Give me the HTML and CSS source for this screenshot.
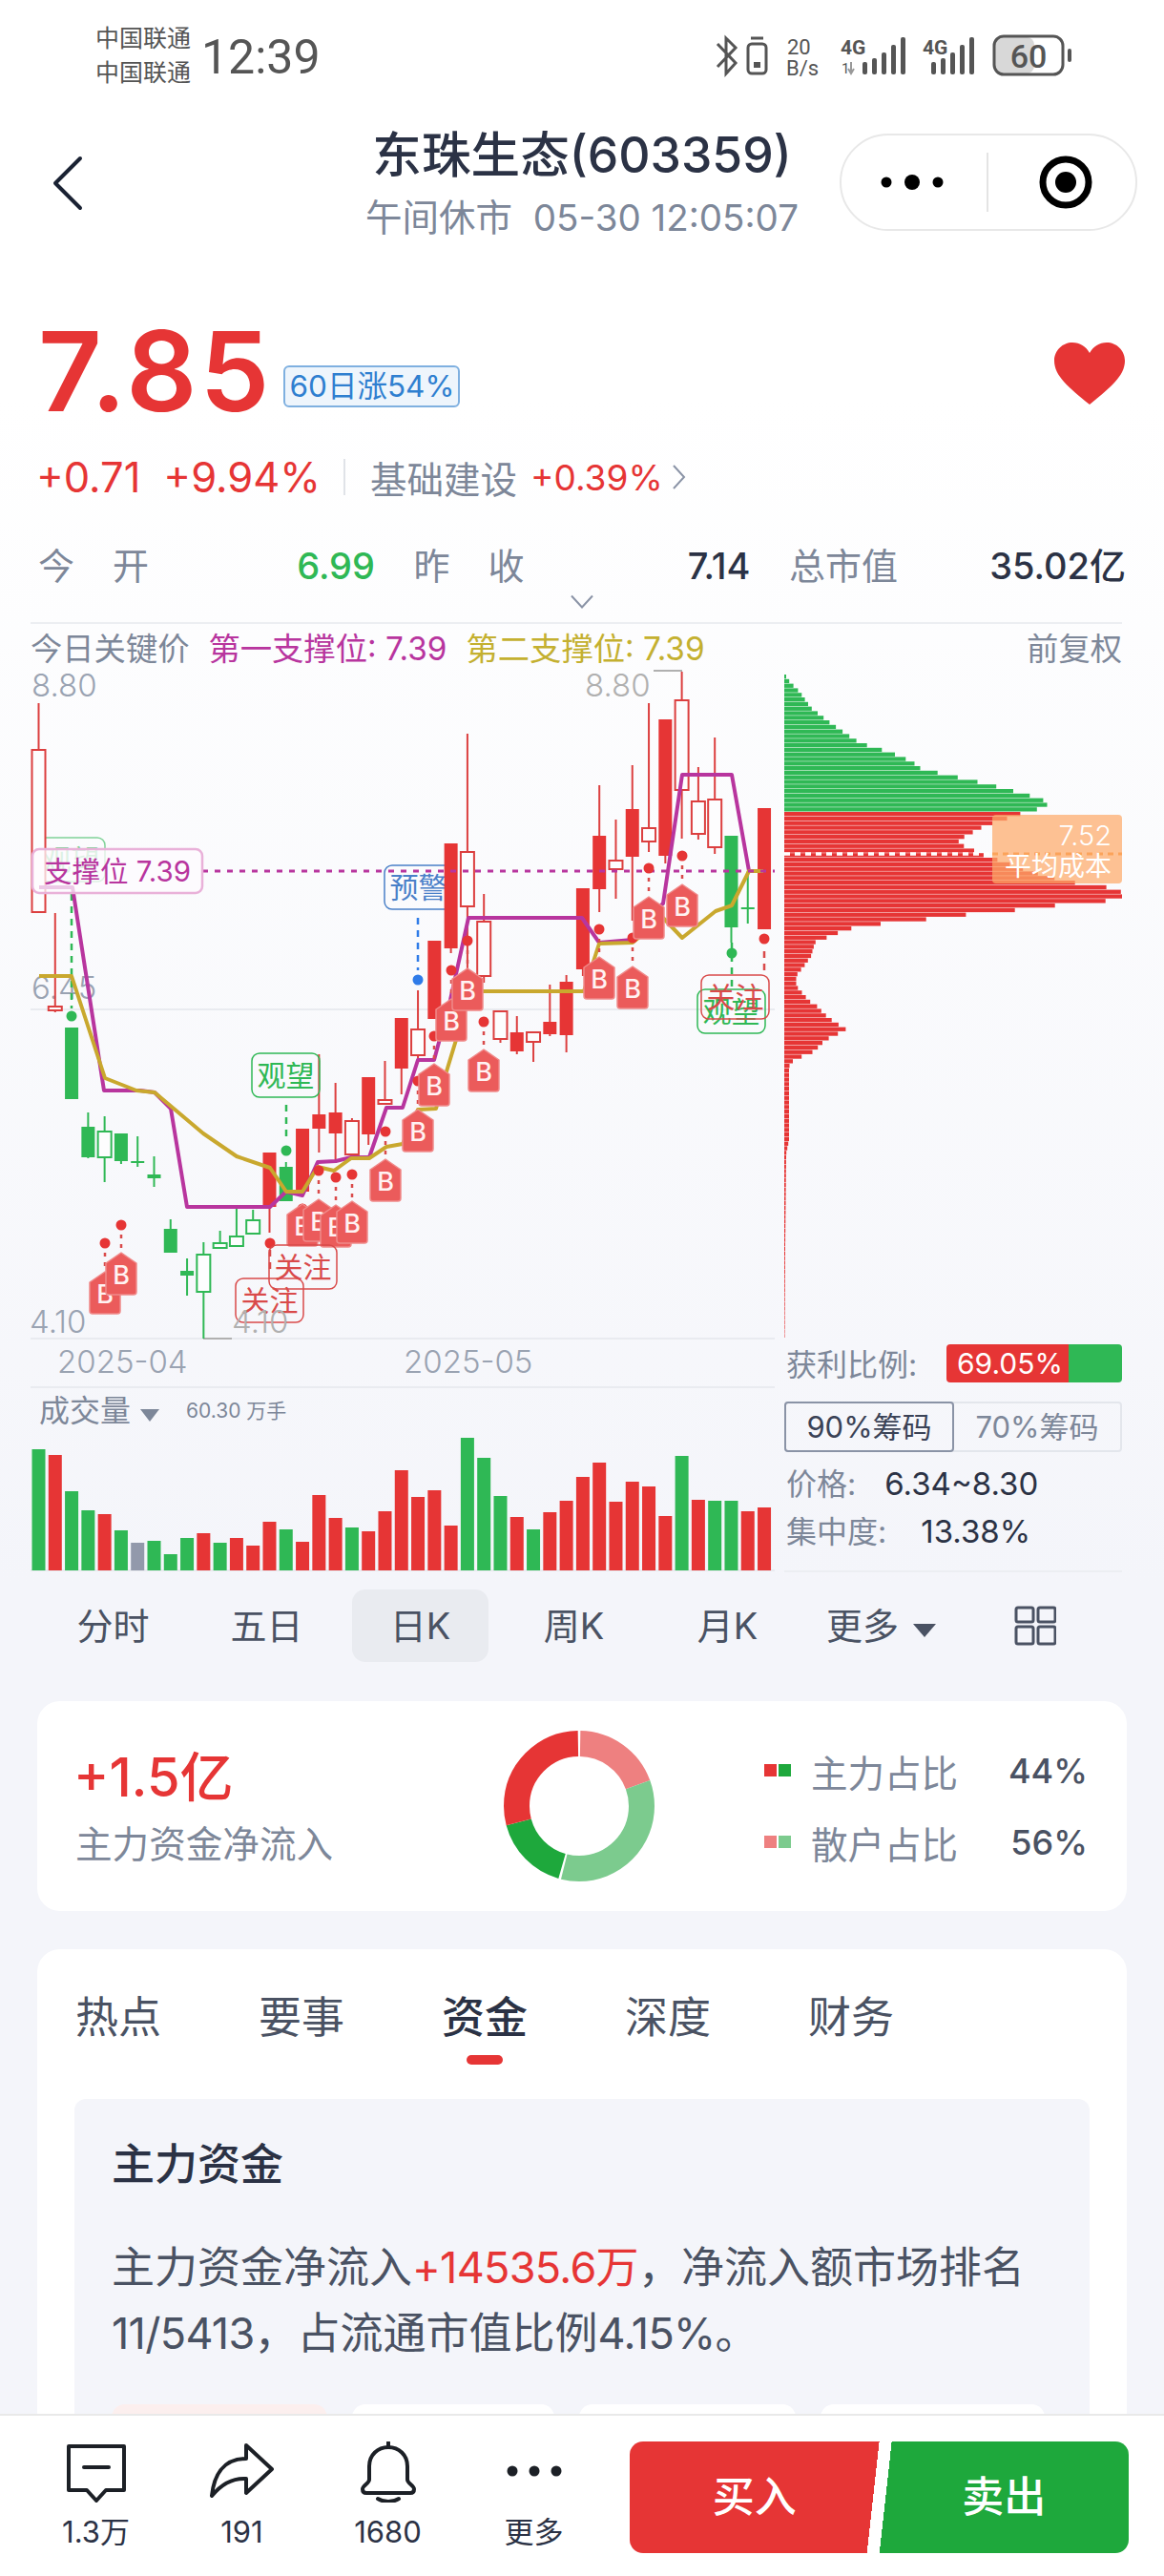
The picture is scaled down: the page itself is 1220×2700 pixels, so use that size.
FILE: index.html
```html
<!DOCTYPE html>
<html lang="zh-CN">
<head>
    <meta charset="UTF-8">
    <meta name="viewport" content="width=device-width, initial-scale=1.0">
    <title>东珠生态(603359)</title>
    <link rel="stylesheet" href="styles.css">
</head>
<body>
<div class="page">

    <header class="status">
        <div class="carriers"><span>中国联通</span><span>中国联通</span></div>
        <div class="clock">12:39</div>
        <svg class="status-icons" viewBox="740 30 390 60" width="390" height="60">
            <g fill="none" stroke="#555" stroke-width="3">
                <path d="M752 47 L771 67 L761 78 V41 L771 51 L752 71"/>
                <rect x="784" y="47" width="19" height="31" rx="4"/>
                <path d="M787 41 H800"/>
            </g>
            <rect x="790" y="66" width="7" height="6" fill="#555"/>
            <text class="st-speed" x="825" y="58">20</text>
            <text class="st-speed" x="824" y="80">B/s</text>
            <text class="st-net" x="881" y="58">4G</text>
            <text class="st-small" x="882" y="78">1</text>
            <path d="M892 66 V78 M889 73 L892 78 L895 73" stroke="#999" stroke-width="2" fill="none"/>
            <g fill="#555">
                <rect x="904" y="66" width="5" height="13" rx="2"/>
                <rect x="914" y="62" width="5" height="17" rx="2"/>
                <rect x="924" y="56" width="5" height="23" rx="2"/>
                <rect x="934" y="48" width="5" height="31" rx="2"/>
                <rect x="944" y="40" width="5" height="39" rx="2"/>
            </g>
            <text class="st-net" x="967" y="58">4G</text>
            <g fill="#555">
                <rect x="976" y="66" width="5" height="13" rx="2"/>
                <rect x="986" y="62" width="5" height="17" rx="2"/>
                <rect x="996" y="56" width="5" height="23" rx="2"/>
                <rect x="1006" y="48" width="5" height="31" rx="2"/>
                <rect x="1016" y="40" width="5" height="39" rx="2"/>
            </g>
            <rect x="1043" y="40" width="41" height="38" rx="8" fill="#d8d8d8"/>
            <rect x="1042" y="39" width="72" height="40" rx="10" fill="none" stroke="#555" stroke-width="3"/>
            <text class="st-batt" x="1078" y="72">60</text>
            <rect x="1119" y="52" width="4" height="14" rx="2" fill="#555"/>
        </svg>
    </header>

    <nav class="nav">
        <svg class="back" width="34" height="60" viewBox="0 0 34 60"><path d="M30 4 L4 30 L30 56" fill="none" stroke="#1a2233" stroke-width="4" stroke-linecap="round" stroke-linejoin="round"/></svg>
        <div class="nav-title">
            <h1>东珠生态(603359)</h1>
            <p>午间休市&nbsp; 05-30 12:05:07</p>
        </div>
        <div class="capsule">
            <svg width="80" height="24" viewBox="0 0 80 24"><circle cx="13" cy="12" r="5.5"/><circle cx="40" cy="12" r="8"/><circle cx="67" cy="12" r="5.5"/></svg>
            <span class="capsule-line"></span>
            <svg width="58" height="58" viewBox="0 0 58 58"><circle cx="29" cy="29" r="24" fill="none" stroke="#000" stroke-width="7"/><circle cx="29" cy="29" r="11"/></svg>
        </div>
    </nav>

    <section class="price-row">
        <div class="price">7.85</div>
        <div class="price-tag">60日涨54%</div>
        <svg class="heart" width="76" height="68" viewBox="0 0 76 68"><path d="M38 66 C16 48 1 36 1 20 C1 9 10 1 20 1 C28 1 34 5 38 12 C42 5 48 1 56 1 C66 1 75 9 75 20 C75 36 60 48 38 66 Z" fill="#e63535"/></svg>
    </section>

    <section class="change-row">
        <span class="up">+0.71</span>
        <span class="up pct">+9.94%</span>
        <span class="change-line"></span>
        <span class="sector">基础建设</span>
        <span class="up sector-pct">+0.39%</span>
        <svg width="16" height="30" viewBox="0 0 16 30"><path d="M2 3 L13 15 L2 27" fill="none" stroke="#8a93a6" stroke-width="2"/></svg>
    </section>

    <section class="stats">
        <div class="stat"><span class="wide">今开</span><b class="green">6.99</b></div>
        <div class="stat"><span class="wide">昨收</span><b>7.14</b></div>
        <div class="stat"><span>总市值</span><b>35.02亿</b></div>
    </section>
    <svg class="more-arrow" width="26" height="20" viewBox="0 0 26 20"><path d="M2 4 L13 16 L24 4" fill="none" stroke="#8a93a6" stroke-width="2"/></svg>

    <section class="chart">
        <div class="chart-head">
            <span>今日关键价</span>
            <span class="c-purple">第一支撑位: 7.39</span>
            <span class="c-yellow">第二支撑位: 7.39</span>
            <span class="adjust">前复权</span>
        </div>
        <div class="chart-body">
            <svg id="kline" class="kline" width="812" height="948" viewBox="0 700 812 948"></svg>
            <div class="chips">
                <div class="chips-plot">
                    <svg id="chips" width="354" height="702" viewBox="822 700 354 702"></svg>
                    <div class="cost">
                        <span>7.52</span>
                        <span>平均成本</span>
                    </div>
                </div>
                <div class="ratio">
                    <span>获利比例:</span>
                    <div class="ratio-bar"><span>69.05%</span></div>
                </div>
                <div class="chip-tabs">
                    <span class="chip-tab active">90%筹码</span>
                    <span class="chip-tab">70%筹码</span>
                </div>
                <div class="chip-line first">价格:<b>6.34~8.30</b></div>
                <div class="chip-line">集中度:<b>13.38%</b></div>
            </div>
        </div>
    </section>

    <div class="periods">
        <span>分时</span>
        <span>五日</span>
        <span class="active">日K</span>
        <span>周K</span>
        <span>月K</span>
        <span>更多<i class="caret"></i></span>
        <svg width="44" height="42" viewBox="0 0 44 42"><g fill="none" stroke="#4a5263" stroke-width="3"><rect x="2" y="2" width="18" height="15" rx="2"/><rect x="25" y="2" width="18" height="15" rx="2"/><rect x="2" y="22" width="18" height="18" rx="2"/><rect x="25" y="22" width="18" height="18" rx="2"/></g></svg>
    </div>

    <section class="flow-card">
        <div class="flow-main">
            <div class="flow-num">+1.5亿</div>
            <div class="flow-label">主力资金净流入</div>
        </div>
        <svg class="donut" width="160" height="160" viewBox="0 0 160 160">
            <g fill="none" stroke-width="27" transform="rotate(-90 80 80)">
                <circle cx="80" cy="80" r="65.5" pathLength="360" stroke="#ee8080" stroke-dasharray="69 360" stroke-dashoffset="-1"/>
                <circle cx="80" cy="80" r="65.5" pathLength="360" stroke="#7ccb8e" stroke-dasharray="124 360" stroke-dashoffset="-70"/>
                <circle cx="80" cy="80" r="65.5" pathLength="360" stroke="#1ea83c" stroke-dasharray="59 360" stroke-dashoffset="-196"/>
                <circle cx="80" cy="80" r="65.5" pathLength="360" stroke="#e63535" stroke-dasharray="104 360" stroke-dashoffset="-255"/>
            </g>
        </svg>
        <div class="legend">
            <div class="legend-row">
                <i class="sq" style="background:#e63535"></i><i class="sq" style="background:#1ea83c"></i>
                <span>主力占比</span><b>44%</b>
            </div>
            <div class="legend-row">
                <i class="sq" style="background:#ee8080"></i><i class="sq" style="background:#7ccb8e"></i>
                <span>散户占比</span><b>56%</b>
            </div>
        </div>
    </section>

    <section class="news-card">
        <div class="news-tabs">
            <span>热点</span>
            <span>要事</span>
            <span class="active">资金</span>
            <span>深度</span>
            <span>财务</span>
        </div>
        <div class="fund-panel">
            <h2>主力资金</h2>
            <p>主力资金净流入<span class="up num">+14535.6万</span>，净流入额市场排名<br><span class="num">11/5413</span>，占流通市值比例<span class="num">4.15%</span>。</p>
            <div class="fund-cells">
                <div class="cell pink"></div>
                <div class="cell c2"></div>
                <div class="cell c3"></div>
                <div class="cell c4"></div>
            </div>
        </div>
    </section>

    <footer class="bar">
        <div class="action">
            <svg width="64" height="64" viewBox="0 0 64 64"><g fill="none" stroke="#1c2026" stroke-width="4" stroke-linejoin="round" stroke-linecap="round"><path d="M3 5 H61 V51 H42 L32 62 L22 51 H3 Z"/><path d="M19 27 H45"/></g></svg>
            <span>1.3万</span>
        </div>
        <div class="action">
            <svg width="70" height="64" viewBox="0 0 70 64"><path d="M39 4 L66 29 L39 54 V39 C24 38 12 46 3 57 C5 37 14 18 39 18 Z" fill="none" stroke="#1c2026" stroke-width="4" stroke-linejoin="round"/></svg>
            <span>191</span>
        </div>
        <div class="action">
            <svg width="60" height="64" viewBox="0 0 60 64"><g fill="none" stroke="#1c2026" stroke-width="4" stroke-linecap="round" stroke-linejoin="round"><path d="M30 1 V6"/><path d="M10 40 V26 C10 14 19 6 30 6 C41 6 50 14 50 26 V40 C50 44 57 46 57 50 C57 53 55 54 53 54 H7 C5 54 3 53 3 50 C3 46 10 44 10 40 Z"/><path d="M19 60 C25 64 35 64 41 60"/></g></svg>
            <span>1680</span>
        </div>
        <div class="action">
            <svg width="64" height="64" viewBox="0 0 64 64"><g fill="#1c2026"><circle cx="9" cy="31" r="5.5"/><circle cx="32" cy="31" r="5.5"/><circle cx="55" cy="31" r="5.5"/></g></svg>
            <span>更多</span>
        </div>
        <div class="trade">
            <span>买入</span>
            <span>卖出</span>
        </div>
    </footer>

</div>
<script src="chart.js"></script>
</body>
</html>
```

FILE: styles.css
```css
*{
    box-sizing: border-box;
    margin: 0;
    padding: 0;
}
body{
    font-family: Inter, "Noto Sans CJK SC", sans-serif;
    color: #2b3245;
}
.page{
    position: relative;
    width: 1220px;
    height: 2700px;
    overflow: hidden;
    background: linear-gradient(#fff 0, #fff 420px, #f4f5fa 1660px);
}
.up{ color: #e63535; }
.green{ color: #2fb855; }
.c-purple{ color: #b8359e; }
.c-yellow{ color: #c4b030; }

/* status bar */
.status{
    display: flex;
    align-items: center;
    height: 118px;
    padding-left: 100px;
    font-family: Roboto, "Noto Sans CJK SC", sans-serif;
    color: #555;
}
.carriers{
    display: flex;
    flex-direction: column;
    font-size: 25px;
    line-height: 36px;
}
.clock{
    margin: 2px 0 0 11px;
    font-size: 50px;
}
.status-icons{
    margin-left: auto;
    margin-right: 90px;
}
.status-icons text{
    font-family: Roboto, sans-serif;
    fill: #555;
}
.st-speed{ font-size: 22px; }
.st-net{ font-size: 21px; font-weight: 700; }
.st-small{ font-size: 15px; }
.st-batt{ font-size: 34px; text-anchor: middle; font-weight: 500; }

/* nav */
.nav{
    display: grid;
    grid-template-columns: 1fr auto 1fr;
    align-items: start;
    height: 132px;
    padding: 0 28px;
}
.back{
    margin: 44px 0 0 26px;
}
.nav-title{
    text-align: center;
}
.nav-title h1{
    font-size: 51.6px;
    font-weight: 500;
    line-height: 60px;
    margin-top: 14px;
}
.nav-title p{
    font-size: 38.5px;
    line-height: 46px;
    margin-top: 13px;
    color: #7d8799;
}
.capsule{
    justify-self: end;
    display: flex;
    align-items: center;
    width: 312px;
    height: 102px;
    margin-top: 22px;
    padding: 0 44px 0 34px;
    border: 2px solid #e8e8e8;
    border-radius: 51px;
}
.capsule-line{
    width: 2px;
    height: 62px;
    margin: 0 auto 0 38px;
    background: #e4e4e4;
}

/* price */
.price-row{
    display: flex;
    align-items: center;
    height: 112px;
    margin-top: 83px;
    padding: 0 40px;
}
.price{
    font-size: 116px;
    font-weight: 600;
    letter-spacing: 3px;
    line-height: 112px;
    color: #e63535;
}
.price-tag{
    margin: 32px 0 0 12px;
    padding: 0 4px;
    height: 44px;
    border: 2px solid #7fb0e0;
    border-radius: 6px;
    background: #eef5fc;
    color: #2f7fd0;
    font-size: 31.5px;
    line-height: 40px;
}
.heart{
    margin: 6px 0 0 auto;
}
.change-row{
    display: flex;
    align-items: center;
    height: 44px;
    margin-top: 33px;
    padding-left: 38px;
    font-size: 43.5px;
}
.pct{ margin-left: 24px; }
.change-line{
    width: 2px;
    height: 38px;
    margin: 0 26px 0 24px;
    background: #e0e3e8;
}
.sector{
    font-size: 38.5px;
    color: #7d8799;
}
.sector-pct{
    margin: 0 9px 0 14px;
    font-size: 37px;
}

.stats{
    display: flex;
    justify-content: space-between;
    height: 44px;
    margin-top: 49px;
    padding: 0 40px;
    font-size: 38px;
    line-height: 44px;
}
.stat{
    display: flex;
    justify-content: space-between;
    width: 353px;
    color: #7d8799;
}
.stat b{
    font-weight: 500;
    color: #2b3245;
}
.stat b.green{ color: #2fb855; }
.wide{ letter-spacing: 40px; }
.more-arrow{
    display: block;
    margin: 4px 0 0 597px;
    height: 23px;
}

/* chart */
.chart-head{
    display: flex;
    align-items: center;
    gap: 20px;
    height: 48px;
    margin: 10px 44px 0 32px;
    border-top: 2px solid #eceef2;
    font-size: 33.3px;
    color: #7d8799;
}
.adjust{ margin-left: auto; }
.chart-body{
    display: flex;
    height: 948px;
}
.kline{
    display: block;
    overflow: visible;
}
.kline text{
    font-family: Inter, "Noto Sans CJK SC", sans-serif;
}
.axis{ font-size: 33px; fill: #9aa3b2; font-weight: 300; }
.axis-mark{ font-size: 33px; fill: #b0b0b0; font-weight: 300; }
.sig{ font-size: 30px; text-anchor: middle; }
.b-text{ font-size: 27px; font-weight: 500; fill: #fff2f2; text-anchor: middle; }
.vol-title{ font-size: 32px; fill: #7d8799; }
.vol-value{ font-size: 21px; fill: #7d8799; }

.chips{
    width: 354px;
    margin-left: 10px;
    border-bottom: 2px solid #eceef2;
}
.chips-plot{
    position: relative;
    height: 702px;
}
.chips-plot svg{ display: block; }
.cost{
    position: absolute;
    top: 154px;
    right: 0;
    display: flex;
    flex-direction: column;
    align-items: flex-end;
    width: 136px;
    height: 72px;
    padding: 6px 11px 0 0;
    border-radius: 4px;
    background: rgba(253, 171, 105, 0.72);
    color: #fff;
    line-height: 32px;
}
.cost span:first-child{ font-size: 29px; font-weight: 300; }
.cost span:last-child{ font-size: 28px; }
.ratio{
    display: flex;
    justify-content: space-between;
    align-items: center;
    height: 40px;
    margin-top: 7px;
    padding-left: 2px;
    font-size: 32px;
    color: #7d8799;
}
.ratio > span{ margin-top: -3px; }
.ratio-bar{
    width: 184px;
    height: 40px;
    border-radius: 4px;
    background: linear-gradient(90deg, #e63535 128px, #2fb855 128px);
    color: #fff;
    font-size: 30px;
    line-height: 40px;
    padding-left: 11px;
}
.chip-tabs{
    display: flex;
    height: 53px;
    margin-top: 20px;
    border: 2px solid #e3e6ec;
    border-radius: 4px;
    font-size: 31px;
    line-height: 49px;
    color: #7d8799;
}
.chip-tab{
    flex: 1;
    text-align: center;
}
.chip-tab.active{
    margin: -2px 0 -2px -2px;
    flex: 0 0 178px;
    height: 53px;
    border: 2px solid #8a93a6;
    border-radius: 4px;
    color: #3a4256;
}
.chip-line{
    height: 50px;
    padding-left: 2px;
    font-size: 32px;
    line-height: 50px;
    color: #7d8799;
}
.chip-line.first{ margin-top: 8px; }
.chip-line b{
    margin-left: 30px;
    font-size: 33px;
    font-weight: 400;
    color: #2b3245;
}
.chip-line + .chip-line b{ margin-left: 36px; }

/* periods */
.periods{
    display: grid;
    grid-template-columns: repeat(7, 161px);
    justify-items: center;
    align-items: center;
    height: 76px;
    margin-top: 18px;
    padding-left: 38px;
    font-size: 38px;
    color: #4a5263;
}
.periods span{
    line-height: 76px;
}
.periods .active{
    width: 143px;
    border-radius: 14px;
    background: #e9ebf0;
    text-align: center;
}
.caret{
    display: inline-block;
    margin-left: 15px;
    vertical-align: 2px;
    border-left: 12px solid transparent;
    border-right: 12px solid transparent;
    border-top: 14px solid #4a5263;
}

/* fund flow card */
.flow-card{
    display: flex;
    align-items: center;
    height: 220px;
    margin: 41px 39px 0;
    border-radius: 24px;
    background: #fff;
}
.flow-main{
    width: 488px;
    padding-left: 38px;
}
.flow-num{
    font-size: 56px;
    font-weight: 500;
    line-height: 70px;
    color: #e63535;
}
.flow-label{
    margin: 10px 0 0 2px;
    font-size: 38.6px;
    line-height: 50px;
    color: #7d8799;
}
.legend{
    margin-left: 114px;
}
.legend-row{
    display: flex;
    align-items: center;
    width: 339px;
    height: 75px;
    font-size: 38.5px;
}
.sq{
    width: 13px;
    height: 13px;
    margin-right: 2px;
}
.legend-row span{
    margin-left: 19px;
    color: #7d8799;
}
.legend-row b{
    margin-left: auto;
    font-size: 36px;
    font-weight: 500;
    color: #4a5263;
}

/* news card */
.news-card{
    height: 700px;
    margin: 40px 39px 0;
    padding-top: 42px;
    border-radius: 24px 24px 0 0;
    background: #fff;
}
.news-tabs{
    display: flex;
    align-items: flex-start;
    gap: 102px;
    height: 79px;
    padding-left: 40px;
    font-size: 45px;
    line-height: 60px;
    color: #4a5263;
}
.news-tabs .active{
    font-weight: 500;
    color: #2b3245;
}
.news-tabs .active::after{
    content: "";
    display: block;
    width: 38px;
    height: 10px;
    margin: 9px auto 0;
    border-radius: 5px;
    background: #e63535;
}
.fund-panel{
    height: 600px;
    margin: 36px 39px 0;
    padding: 39px 39px 0;
    border-radius: 12px 12px 0 0;
    background: #f4f5fa;
}
.fund-panel h2{
    font-size: 45px;
    font-weight: 500;
    line-height: 60px;
}
.fund-panel p{
    margin-top: 43px;
    font-size: 45px;
    line-height: 69px;
    color: #4a5263;
    white-space: nowrap;
}
.num{ letter-spacing: -0.7px; }
.fund-cells{
    display: flex;
    gap: 26px;
    margin-top: 40px;
}
.cell{
    width: 226px;
    height: 80px;
    border-radius: 14px 14px 0 0;
    background: #fff;
}
.cell.pink{ background: #fcefee; }
.cell.c2{ width: 212px; }
.cell.c3{ width: 227px; }
.cell.c4{ width: 235px; }

/* bottom bar */
.bar{
    position: absolute;
    left: 0;
    right: 0;
    bottom: 0;
    display: flex;
    align-items: flex-start;
    height: 170px;
    padding: 27px 37px 0 24px;
    border-top: 2px solid #e9e9e9;
    background: #fff;
}
.action{
    display: flex;
    flex-direction: column;
    align-items: center;
    width: 153px;
    font-size: 31px;
    line-height: 40px;
    color: #2b3245;
}
.action svg{ display: block; }
.action span{ margin-top: 11px; }
.trade{
    display: flex;
    width: 523px;
    height: 117px;
    border-radius: 14px;
    margin-left: 24px;
    background: linear-gradient(96.3deg, #e63535 260px, #fff 260px, #fff 273px, #1ea83c 273px);
    color: #fff;
    font-size: 44px;
    font-weight: 500;
    line-height: 117px;
    text-align: center;
}
.trade span{ flex: 1; }
```

FILE: chart.js
```javascript
const RED = '#e63535', GREEN = '#2fb855', PURPLE = '#b8359e', YELLOW = '#c9a82e', BLUE = '#2f7be8';
const STEP = 17.285;

function cx(i) { return 40.5 + STEP * i; }

// type, body top, body bottom, wick top, wick bottom
const candles = [
    ['rh',786,956,737,956], ['rh',1055,1059,957,1061], ['gs',1077,1152,1077,1152], ['gs',1181,1213,1166,1214],
    ['gh',1186,1213,1170,1239], ['gs',1188,1217,1188,1220], ['gs',1217,1219,1191,1223], ['gs',1231,1235,1212,1244],
    ['gs',1288,1313,1278,1313], ['gs',1332,1337,1319,1358], ['gh',1315,1354,1302,1403], ['gh',1303,1308,1290,1308],
    ['gh',1296,1306,1267,1307], ['gh',1279,1293,1268,1293], ['rs',1208,1265,1208,1292], ['gs',1223,1259,1218,1259],
    ['rs',1183,1249,1183,1249], ['rs',1168,1183,1105,1208], ['rs',1166,1188,1135,1217], ['rh',1175,1210,1172,1210],
    ['rs',1129,1189,1129,1200], ['rh',1153,1157,1112,1157], ['rs',1067,1120,1067,1147], ['rh',1079,1106,1038,1110],
    ['rs',986,1068,986,1068], ['rs',884,994,884,999], ['rh',893,950,769,1020], ['rh',966,1023,937,1030],
    ['rh',1060,1089,1060,1093], ['rs',1082,1102,1065,1105], ['rh',1082,1092,1082,1113], ['rs',1071,1084,1032,1086],
    ['rs',1029,1085,1022,1103], ['rs',931,1016,931,1023], ['rs',876,932,823,956], ['rh',902,911,859,942],
    ['rs',848,898,802,965], ['rh',868,882,737,893], ['rs',754,897,754,905], ['rh',734,828,704,879],
    ['rh',840,874,804,880], ['rh',838,888,773,895], ['gs',876,972,876,988], ['gs',951,953,913,968],
    ['rs',847,974,847,974]
];

const purple = [[41,930],[76,930],[109,1143],[147,1143],[162,1145],[179,1162],[196,1265],[283,1265],[300,1249],[317,1253],[333,1218],[352,1217],[368,1213],[387,1213],[405,1161],[422,1161],[438,1111],[455,1111],[472,1048],[491,962],[610,962],[628,988],[663,985],[680,960],[695,947],[715,812],[767,812],[785,913]];
const yellow = [[41,1023],[75,1023],[110,1130],[143,1143],[162,1145],[213,1188],[248,1212],[283,1224],[300,1249],[317,1249],[333,1223],[350,1227],[368,1214],[387,1214],[405,1202],[422,1199],[438,1163],[457,1162],[468,1123],[478,1090],[491,1039],[612,1039],[628,989],[663,988],[695,962],[715,983],[750,955],[767,949],[785,913],[800,913]];

// x, dot y, tag top
const buys = [
    [110,1303,1333], [127,1284,1313], [317,1267,1262], [334,1227,1257], [352,1234,1263], [369,1231,1259], [404,1186,1215],
    [438,1133,1163], [455,1086,1115], [473,1017,1047], [490,986,1015], [507,1071,1100], [628,974,1003], [663,983,1013],
    [680,910,940], [715,897,927]
];

// top, colour
const volumes = [
    [237,'g'],[255,'r'],[369,'g'],[429,'g'],[441,'r'],[492,'g'],[531,'n'],[525,'g'],[567,'g'],[516,'g'],[501,'r'],[531,'g'],
    [516,'r'],[540,'r'],[465,'r'],[489,'g'],[528,'r'],[381,'r'],[453,'r'],[483,'g'],[495,'r'],[432,'r'],[303,'r'],[387,'r'],
    [366,'r'],[477,'r'],[201,'g'],[264,'g'],[384,'g'],[450,'r'],[489,'g'],[435,'r'],[399,'r'],[324,'r'],[279,'r'],[402,'r'],
    [339,'r'],[354,'r'],[447,'r'],[258,'g'],[396,'r'],[399,'g'],[399,'g'],[432,'r'],[420,'r']
];

function drawCandle(c, i) {
    const x = cx(i);
    const col = c[0][0] === 'r' ? '#dc3f3f' : GREEN;
    let s = `<line x1="${x}" x2="${x}" y1="${c[3]}" y2="${c[4]}" stroke="${col}" stroke-width="2"/>`;
    if (c[0][1] === 'h') {
        s += `<rect x="${x - 7}" y="${c[1]}" width="14" height="${c[2] - c[1]}" fill="#fdfdfe" stroke="${col}" stroke-width="2"/>`;
    } else {
        s += `<rect x="${x - 7}" y="${c[1]}" width="14" height="${c[2] - c[1]}" fill="${c[0][0] === 'r' ? RED : GREEN}"/>`;
    }
    return s;
}

function polyline(points, colour) {
    return `<polyline points="${points.map(p => p.join(',')).join(' ')}" fill="none" stroke="${colour}" stroke-width="4" stroke-linejoin="round"/>`;
}

// labels stay see-through, the ones that overlap show each other
function signal(x, y, text, colour, opacity) {
    return `<g opacity="${opacity || 1}"><rect x="${x}" y="${y}" width="71" height="46" rx="8" fill="none" stroke="${colour}" stroke-width="1.5"/>` +
        `<text class="sig" x="${x + 35.5}" y="${y + 34}" fill="${colour}">${text}</text></g>`;
}

function dot(x, y, colour) {
    return `<circle cx="${x}" cy="${y}" r="5.5" fill="${colour}"/>`;
}

function dash(x, y1, y2, colour, pattern) {
    return `<line x1="${x}" x2="${x}" y1="${y1}" y2="${y2}" stroke="${colour}" stroke-width="2.5" stroke-dasharray="${pattern}"/>`;
}

function buyTag(b) {
    const x = b[0], t = b[2];
    return dot(x, b[1], RED) + dash(x, b[1] + 10, t, '#d94a4a', '4 6') +
        `<path d="M${x} ${t} L${x + 16} ${t + 11} V${t + 41} Q${x + 16} ${t + 44} ${x + 13} ${t + 44} H${x - 13} Q${x - 16} ${t + 44} ${x - 16} ${t + 41} V${t + 11} Z" fill="#eb5b5b" stroke="#f08a8a" stroke-width="1.5" stroke-linejoin="round"/>` +
        `<text class="b-text" x="${x}" y="${t + 33}">B</text>`;
}

function drawKline() {
    let s = '';
    // grid
    s += '<g stroke="#e9ebf0" stroke-width="2"><line x1="32" x2="812" y1="1058" y2="1058"/><line x1="32" x2="812" y1="1403" y2="1403"/><line x1="32" x2="812" y1="1454" y2="1454"/><line x1="32" x2="812" y1="1646" y2="1646"/></g>';
    s += '<text class="axis" x="33" y="730">8.80</text><text class="axis" x="33" y="1047">6.45</text><text class="axis" x="31" y="1397">4.10</text>';
    s += '<text class="axis" x="60" y="1439">2025-04</text><text class="axis" x="423" y="1439">2025-05</text>';
    // markers for the highest and lowest price
    s += '<text class="axis-mark" x="613" y="730">8.80</text><path d="M685 703 H715" stroke="#b0b0b0" stroke-width="2"/>';
    s += '<path d="M213 1403 H243" stroke="#b0b0b0" stroke-width="2"/>';

    s += signal(39, 878, '观望', GREEN, 0.6);
    s += signal(403, 907, '预警', '#4a80c8');
    s += dash(75, 937, 1057, GREEN, '7 6');
    s += candles.map(drawCandle).join('');
    s += polyline(purple, PURPLE) + polyline(yellow, YELLOW);

    // support level
    s += `<line x1="212" x2="812" y1="913" y2="913" stroke="${PURPLE}" stroke-width="3" stroke-dasharray="6 7"/>`;
    s += `<rect x="34" y="890" width="178" height="46" rx="7" fill="#fdfbfd" fill-opacity="0.75" stroke="#e9b1d9" stroke-width="2.5"/>`;
    s += `<text x="46" y="924" font-size="29.5" fill="${PURPLE}">支撑位 7.39</text>`;

    s += dot(75, 1065, GREEN);
    s += signal(264, 1104, '观望', GREEN);
    s += dash(300, 1158, 1196, GREEN, '7 6') + dot(300, 1206, GREEN);
    s += dash(438, 962, 1017, BLUE, '7 6') + dot(438, 1027, BLUE);
    s += dash(767, 988, 1040, GREEN, '7 6') + dot(767, 999, GREEN);
    s += dash(801, 997, 1020, '#d94a4a', '7 6') + dot(801, 984, RED);
    s += dash(283, 1310, 1330, '#d94a4a', '7 6') + dot(283, 1303, RED);

    s += buys.map(buyTag).join('');

    s += signal(282, 1305, '关注', '#d94a4a');
    s += signal(247, 1340, '关注', '#d94a4a');
    s += '<text class="axis-mark" x="243" y="1397">4.10</text>';
    s += signal(731, 1037, '观望', GREEN);
    s += signal(735, 1022, '关注', '#d94a4a');

    // volume
    s += '<text class="vol-title" x="41" y="1490">成交量</text><path d="M147 1477 H167 L157 1490 Z" fill="#7d8799"/>';
    s += '<text class="vol-value" x="195" y="1486">60.30 万手</text>';
    volumes.forEach(function (v, i) {
        const top = 1440 + v[0] / 3;
        const col = v[1] === 'r' ? RED : v[1] === 'g' ? GREEN : '#9299ab';
        s += `<rect x="${cx(i) - 7}" y="${top}" width="14" height="${1646 - top}" fill="${col}"/>`;
    });
    document.querySelector('#kline').innerHTML = s;
}

// y, bar length
const profile = [
    [707,2],[713,6],[723,16],[740,28],[757,50],[768,66],[777,80],[783,100],[790,120],[797,135],[805,145],[810,173],[815,190],
    [820,216],[825,230],[828,245],[832,258],[835,270],[842,276],[846,266],[848,254],[853,243],[858,226],[863,211],[870,198],
    [877,185],[882,181],[887,195],[893,205],[897,218],[907,245],[915,271],[922,298],[925,318],[928,339],[933,354],[938,354],
    [942,339],[945,305],[948,273],[952,240],[955,208],[958,175],[962,144],[965,113],[968,83],[972,66],[975,58],[980,46],
    [985,33],[990,31],[1000,28],[1010,21],[1020,13],[1027,12],[1033,14],[1040,20],[1047,26],[1053,35],[1060,41],[1068,51],
    [1077,65],[1082,55],[1088,43],[1095,36],[1100,31],[1104,21],[1109,11],[1112,6],[1118,5],[1193,5],[1207,2],[1307,1],[1400,0.5]
];

function barLength(y) {
    for (let i = 1; i < profile.length; i++) {
        if (y <= profile[i][0]) {
            const a = profile[i - 1], b = profile[i];
            return a[1] + (b[1] - a[1]) * (y - a[0]) / (b[0] - a[0]);
        }
    }
    return 0;
}

function drawChips() {
    let s = '';
    for (let y = 707; y < 1400; y += 4.8) {
        const col = y < 847 ? GREEN : RED;
        s += `<rect x="822" y="${y.toFixed(1)}" width="${barLength(y).toFixed(1)}" height="4.3" fill="${col}"/>`;
    }
    s += '<line x1="822" x2="1176" y1="895" y2="895" stroke="#fff" stroke-width="3.5" stroke-dasharray="6 5"/>';
    s += '<line x1="1040" x2="1176" y1="895" y2="895" stroke="#f59034" stroke-width="3" stroke-dasharray="6 5"/>';
    document.querySelector('#chips').innerHTML = s;
}

drawKline();
drawChips();
```
